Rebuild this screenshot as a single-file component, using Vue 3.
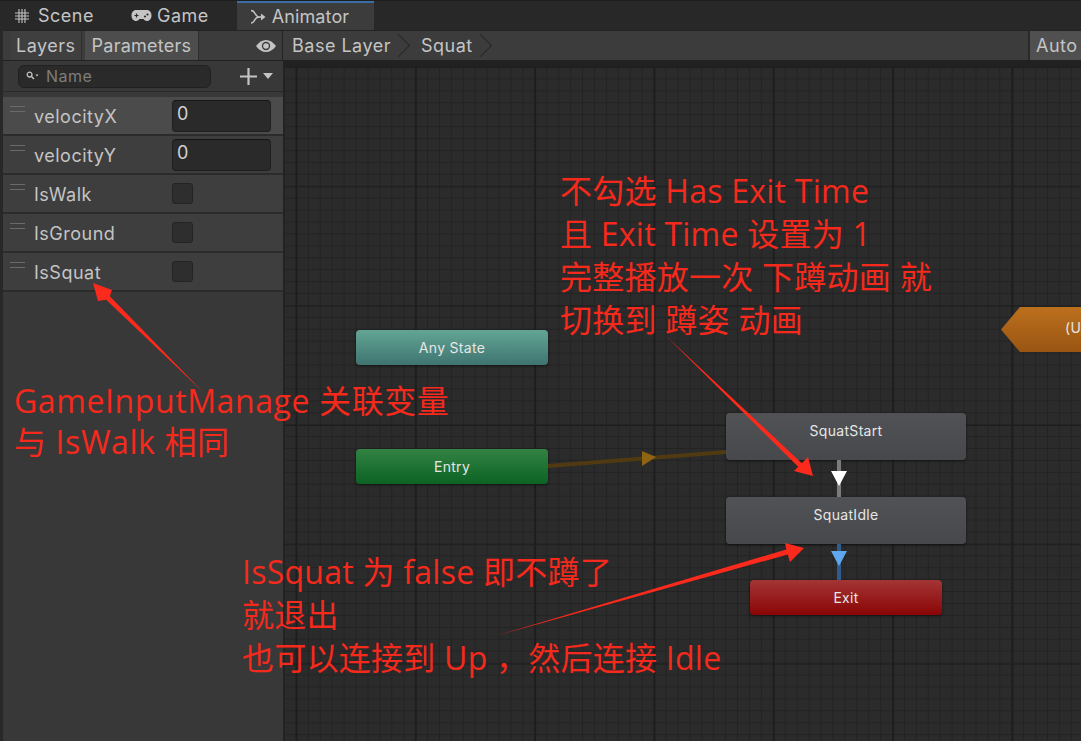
<script setup>
const params = [
  { name: 'velocityX', type: 'num', value: '0', active: true },
  { name: 'velocityY', type: 'num', value: '0' },
  { name: 'IsWalk', type: 'bool' },
  { name: 'IsGround', type: 'bool' },
  { name: 'IsSquat', type: 'bool' },
]

// tapered arrow: thin tail, wide barbs
const arrows = [
  { tail: [203, 392], neck: [108, 298], b1: [112, 290], b2: [98, 301], tip: [93, 283] },
  { tail: [665, 335], neck: [800, 465], b1: [808, 457], b2: [794, 471], tip: [813, 476] },
  { tail: [495, 636], neck: [787, 552], b1: [785, 543], b2: [790, 562], tip: [804, 548] },
]

function arrowPoints(a) {
  const dx = a.neck[0] - a.tail[0]
  const dy = a.neck[1] - a.tail[1]
  const len = Math.hypot(dx, dy)
  const nx = (-dy / len) * 2.6
  const ny = (dx / len) * 2.6
  const swap = a.b2[0] * nx + a.b2[1] * ny > a.b1[0] * nx + a.b1[1] * ny
  return [
    a.tail,
    [a.neck[0] + nx, a.neck[1] + ny],
    swap ? a.b2 : a.b1,
    a.tip,
    swap ? a.b1 : a.b2,
    [a.neck[0] - nx, a.neck[1] - ny],
  ].map((p) => p.join(',')).join(' ')
}
</script>

<template>
  <div class="window">
    <div class="tabs">
      <div class="tab">
        <svg class="tab-icon" width="16" height="16" viewBox="0 0 16 16"><path d="M5 1v14M11 1v14M1 5h14M1 11h14M8 1v14M1 8h14" stroke="#c4c4c4" stroke-width="1.1" fill="none" /></svg>
        <span>Scene</span>
      </div>
      <div class="tab tab-game">
        <svg width="21" height="13" viewBox="0 0 21 13"><path d="M5 1h11c2.600 0 4.500 2.400 4.500 5.500S18.600 12 16 12c-1.600 0-2.600-1-3.500-2h-4c-.9 1-1.900 2-3.500 2C2.400 12 .5 9.600.5 6.500S2.400 1 5 1z" fill="#c4c4c4" /><path d="M3.500 6.500h4M5.500 4.500v4" stroke="#2a2a2a" stroke-width="1.200" /><circle cx="14" cy="7.500" r="1.100" fill="#2a2a2a" /><circle cx="16.500" cy="5.500" r="1.100" fill="#2a2a2a" /></svg>
        <span>Game</span>
      </div>
      <div class="tab tab-active">
        <svg width="16" height="16" viewBox="0 0 16 16"><path d="M1 1.500c2 0 3 1 4 3s2 3.500 5 3.500h3M1 14c2 0 3-1.500 4-3.500S7 8 10 8" stroke="#c4c4c4" stroke-width="1.500" fill="none" /><path d="M11 4.500 15.500 8 11 11.500z" fill="#c4c4c4" /></svg>
        <span>Animator</span>
      </div>
    </div>

    <div class="toolbar">
      <div class="side-tools">
        <button class="tool-btn">Layers</button>
        <button class="tool-btn tool-on">Parameters</button>
        <svg class="eye" width="22" height="14" viewBox="0 0 22 14"><path d="M1 7c3-4 6.400-6 10-6s7 2 10 6c-3 4-6.400 6-10 6S4 11 1 7z" fill="#c4c4c4" /><circle cx="11" cy="7" r="4.200" fill="#3c3c3c" /><circle cx="11" cy="7" r="2.800" fill="#c4c4c4" /></svg>
      </div>
      <div class="crumbs">
        <div class="crumb">Base Layer<i class="chev"></i></div>
        <div class="crumb">Squat<i class="chev"></i></div>
        <div class="crumb-fill"></div>
        <button class="auto-btn">Auto</button>
      </div>
    </div>

    <div class="body">
      <aside class="side">
        <div class="search-row">
          <div class="search">
            <svg width="13" height="10" viewBox="0 0 13 10"><circle cx="3.600" cy="3.600" r="2.400" stroke="#c4c4c4" stroke-width="1.300" fill="none" /><path d="M5.500 5.500 8 8" stroke="#c4c4c4" stroke-width="1.500" /><path d="M9.500 3.500h3L11 5.500z" fill="#c4c4c4" /></svg>
            <span>Name</span>
          </div>
          <div class="add">
            <svg width="19" height="19" viewBox="0 0 19 19"><path d="M9.500 1v17M1 9.500h17" stroke="#c4c4c4" stroke-width="2.200" /></svg>
            <i class="caret"></i>
          </div>
        </div>
        <div class="list">
          <div v-for="p in params" :key="p.name" class="row" :class="{ 'row-active': p.active }">
            <div class="grip"></div>
            <div class="row-name">{{ p.name }}</div>
            <div v-if="p.type === 'num'" class="num">{{ p.value }}</div>
            <div v-else class="check"></div>
          </div>
        </div>
      </aside>

      <main class="graph">
        <div class="node node-any">Any State</div>
        <div class="node node-entry">Entry</div>
        <div class="node node-state node-start">SquatStart</div>
        <div class="node node-state node-idle">SquatIdle</div>
        <div class="node node-exit">Exit</div>
        <div class="node-up">(U</div>
      </main>
    </div>

    <svg class="links" width="1081" height="741" viewBox="0 0 1081 741">
      <line x1="548" y1="466" x2="726" y2="452" stroke="#4f3a12" stroke-width="4" />
      <polygon points="642,451 656,457 642,466" fill="#8f6410" />
      <line x1="839" y1="460" x2="839" y2="497" stroke="#7b7b7b" stroke-width="4" />
      <polygon points="831,471 847,471 839,486" fill="#fff" />
      <line x1="839" y1="544" x2="839" y2="580" stroke="#2f5c8c" stroke-width="4" />
      <polygon points="831,551 847,551 839,566" fill="#5fa8ee" />
      <polygon v-for="(a, i) in arrows" :key="i" :points="arrowPoints(a)" fill="#fb2a1c" />
    </svg>

    <div class="note note-a">不勾选 Has Exit Time<br />且 Exit Time 设置为 1<br />完整播放一次 下蹲动画 就<br />切换到 蹲姿 动画</div>
    <div class="note note-b">GameInputManage 关联变量<br />与 IsWalk 相同</div>
    <div class="note note-c">IsSquat 为 false 即不蹲了<br />就退出<br />也可以连接到 Up ，然后连接 Idle</div>
  </div>
</template>

<style scoped>
* {
  box-sizing: border-box;
}

.window {
  position: relative;
  display: flex;
  flex-direction: column;
  width: 1081px;
  height: 741px;
  overflow: hidden;
  background: #282828;
  color: #c4c4c4;
  font-family: Inter, "Noto Sans", sans-serif;
  font-size: 18px;
  letter-spacing: 0.5px;
}

.tabs {
  display: flex;
  height: 30px;
  padding-left: 14px;
  background: #282828;
  border-top: 1px solid #1e1e1e;
}

.tab {
  display: flex;
  align-items: center;
  gap: 8px;
  height: 29px;
}

.tab-game {
  margin-left: 37px;
  gap: 5px;
}

.tab-active {
  margin-left: 28px;
  width: 137px;
  padding-left: 13px;
  gap: 6px;
  background: #3c3c3c;
  border-top: 2px solid #3a6ea5;
  letter-spacing: 0.1px;
}

.toolbar {
  display: flex;
  height: 31px;
  margin-left: 3px;
  background: #3c3c3c;
  border-top: 1px solid #232323;
  border-bottom: 1px solid #232323;
}

.side-tools {
  display: flex;
  flex: none;
  align-items: center;
  width: 280px;
  padding-left: 8px;
  border-right: 1px solid #232323;
}

button {
  height: 100%;
  border: 0;
  padding: 0;
  color: inherit;
  font: inherit;
  letter-spacing: inherit;
}

.tool-btn {
  height: 29px;
  padding: 0 5px;
  margin-right: 3px;
  background: #3f3f3f;
  border-right: 1px solid #2e2e2e;
}

.tool-on {
  padding: 0 7px;
  background: #4d4d4d;
  letter-spacing: 0.25px;
}

.eye {
  flex: none;
  margin-left: 53px;
}

.crumbs {
  display: flex;
  flex: 1;
  align-items: center;
  min-width: 0;
  background: #3c3c3c;
}

.crumb {
  position: relative;
  display: flex;
  align-items: center;
  height: 100%;
  padding: 0 8px 0 9px;
  margin-right: 13px;
}

.chev {
  position: absolute;
  right: -7px;
  top: 7px;
  width: 15px;
  height: 15px;
  border-top: 1px solid #282828;
  border-right: 1px solid #282828;
  transform: rotate(45deg) scale(1.1);
}

.crumb-fill {
  flex: 1;
}

.auto-btn {
  flex: none;
  width: 53px;
  height: 29px;
  padding-left: 6px;
  text-align: left;
  white-space: nowrap;
  background: #505050;
  border-left: 2px solid #2a2a2a;
}

.body {
  display: flex;
  flex: 1;
  min-height: 0;
  margin-left: 3px;
}

.side {
  flex: none;
  width: 281px;
  background: #383838;
  border-right: 1px solid #232323;
}

.search-row {
  display: flex;
  align-items: center;
  height: 31px;
  padding-left: 15px;
  border-bottom: 1px solid #2a2a2a;
}

.search {
  display: flex;
  align-items: center;
  gap: 7px;
  width: 193px;
  height: 23px;
  padding-left: 7px;
  border-radius: 6px;
  background: #2a2a2a;
  border: 1px solid #212121;
  color: #7d7d7d;
  font-size: 16px;
}

.add {
  display: flex;
  align-items: center;
  gap: 5px;
  margin-left: 28px;
}

.caret {
  width: 0;
  height: 0;
  border-left: 5px solid transparent;
  border-right: 5px solid transparent;
  border-top: 6px solid #c4c4c4;
}

.list {
  padding-top: 5px;
}

.row {
  display: flex;
  align-items: center;
  height: 39px;
  background: #3e3e3e;
  border-bottom: 2px solid #2b2b2b;
}

.row-active {
  background: #4b4b4b;
}

.grip {
  flex: none;
  width: 15px;
  height: 6px;
  margin: -14px 0 0 7px;
  border-top: 1px solid #6a6a6a;
  border-bottom: 1px solid #6a6a6a;
}

.row-name {
  flex: none;
  width: 138px;
  margin-left: 9px;
  padding-top: 2px;
}

.num {
  width: 99px;
  height: 32px;
  padding: 2px 0 0 4px;
  border-radius: 4px;
  background: #2a2a2a;
  border: 1px solid #1f1f1f;
  border-top-color: #151515;
  color: #d2d2d2;
}

.check {
  width: 21px;
  height: 21px;
  border-radius: 3px;
  background: #2e2e2e;
  border: 1px solid #232323;
}

.graph {
  position: relative;
  flex: 1;
  min-width: 0;
  background-color: #2b2b2b;
  background-image:
    linear-gradient(to bottom, #212121 6px, transparent 6px),
    linear-gradient(to right, #1e1e1e 2px, transparent 2px),
    linear-gradient(to bottom, #1e1e1e 1px, transparent 1px),
    linear-gradient(to right, #232323 1px, transparent 1px),
    linear-gradient(to bottom, #232323 1px, transparent 1px);
  background-size:
    100% 100%,
    119.33px 119.33px,
    119.33px 119.33px,
    11.933px 11.933px,
    11.933px 11.933px;
  background-position:
    0 0,
    11.5px 5.5px,
    11.5px 6px,
    0 5.5px,
    0 5.5px;
}

.node {
  position: absolute;
  display: flex;
  align-items: center;
  justify-content: center;
  width: 192px;
  height: 35px;
  border-radius: 4px;
  font-size: 14px;
  letter-spacing: 0.3px;
  color: #e6e6e6;
  box-shadow: 0 1px 3px rgba(0, 0, 0, 0.5);
}

.node-any {
  left: 72px;
  top: 269px;
  background: linear-gradient(#63a594, #3f7471);
}

.node-entry {
  left: 72px;
  top: 388px;
  background: linear-gradient(#338343, #0b6324);
}

.node-state {
  width: 240px;
  height: 47px;
  padding-bottom: 12px;
  background: linear-gradient(#505256, #46484b);
}

.node-start {
  left: 442px;
  top: 352px;
}

.node-idle {
  left: 442px;
  top: 436px;
}

.node-exit {
  left: 466px;
  top: 519px;
  background: linear-gradient(#a43535, #8a0505);
}

.node-up {
  position: absolute;
  left: 717px;
  top: 246px;
  width: 80px;
  height: 45px;
  padding: 12px 0 0 64px;
  font-size: 14px;
  color: #e6e6e6;
  white-space: nowrap;
  background: linear-gradient(#bc701e, #9a5512);
  clip-path: polygon(19px 0, 100% 0, 100% 100%, 19px 100%, 0 50%);
}

.links {
  position: absolute;
  left: 0;
  top: 0;
  pointer-events: none;
}

.note {
  position: absolute;
  color: #f5291c;
  font-family: "Open Sans", "Noto Sans CJK SC", sans-serif;
  font-size: 32px;
  line-height: 43px;
  letter-spacing: 0.25px;
  white-space: nowrap;
}

.note-a {
  left: 560px;
  top: 169px;
}

.note-b {
  left: 14px;
  top: 380px;
  line-height: 41px;
  letter-spacing: 0.6px;
}

.note-c {
  left: 242px;
  top: 550px;
}
</style>
